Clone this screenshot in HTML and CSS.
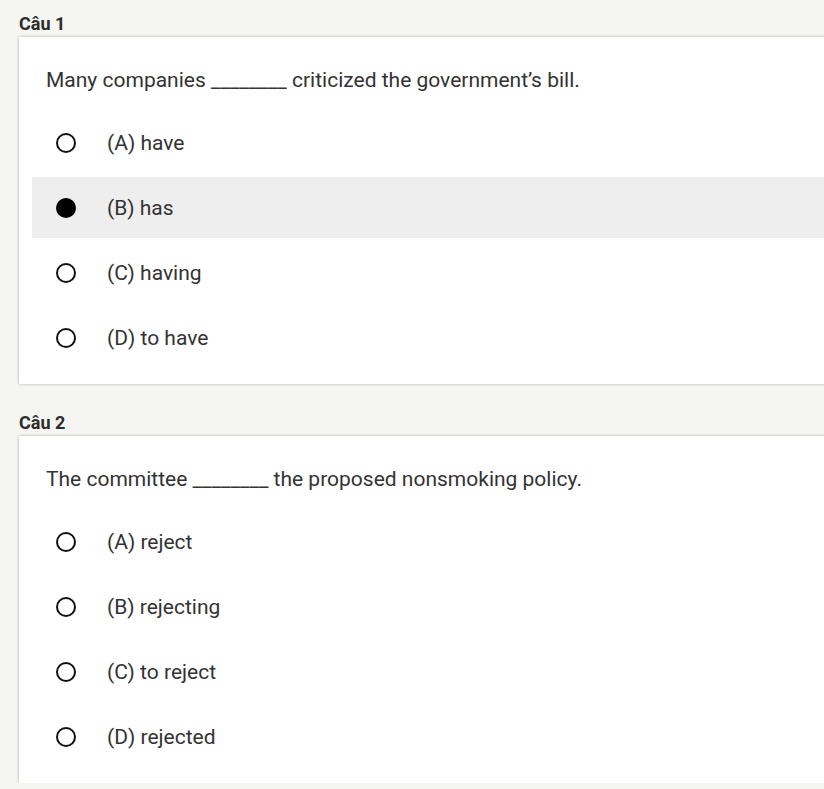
FILE: index.html
```html
<!DOCTYPE html>
<html lang="vi">
<head>
<meta charset="utf-8">
<title>Quiz</title>
<link rel="stylesheet" href="styles.css">
</head>
<body>
<div class="page">
  <section class="question">
    <div class="label">Câu 1</div>
    <div class="card">
      <p class="prompt">Many companies ________ criticized the government’s bill.</p>
      <ul class="options">
        <li class="option"><span class="radio"></span><span class="text">(A) have</span></li>
        <li class="option selected"><span class="radio checked"></span><span class="text">(B) has</span></li>
        <li class="option"><span class="radio"></span><span class="text">(C) having</span></li>
        <li class="option"><span class="radio"></span><span class="text">(D) to have</span></li>
      </ul>
    </div>
  </section>
  <section class="question">
    <div class="label">Câu 2</div>
    <div class="card">
      <p class="prompt">The committee ________ the proposed nonsmoking policy.</p>
      <ul class="options">
        <li class="option"><span class="radio"></span><span class="text">(A) reject</span></li>
        <li class="option"><span class="radio"></span><span class="text">(B) rejecting</span></li>
        <li class="option"><span class="radio"></span><span class="text">(C) to reject</span></li>
        <li class="option"><span class="radio"></span><span class="text">(D) rejected</span></li>
      </ul>
    </div>
  </section>
</div>
</body>
</html>
```
FILE: styles.css
```css
html, body {
  margin: 0;
  padding: 0;
  background: #f5f5f1;
  overflow: hidden;
}
body {
  font-family: Roboto, "Liberation Sans", sans-serif;
  color: #333;
}
.page {
  padding: 12px 0 0 19px;
  display: flex;
  flex-direction: column;
  gap: 27px;
}
.label {
  font-size: 18px;
  font-weight: 700;
  line-height: 24px;
  color: #2c2c2c;
  margin-bottom: 1px;
}
.card {
  background: #fff;
  width: 900px;
  padding: 28px 0 16px 13px;
  box-shadow: 0 0 3px rgba(0, 0, 0, 0.28);
}
.prompt {
  margin: 0 0 17px 14px;
  font-size: 21px;
  line-height: 30px;
  color: #333;
}
.options {
  list-style: none;
  margin: 0;
  padding: 0;
  display: flex;
  flex-direction: column;
  gap: 4px;
}
.option {
  height: 61px;
  display: flex;
  align-items: center;
  padding-left: 24px;
  font-size: 21px;
  color: #333;
}
.option.selected {
  background: #eeeeee;
}
.radio {
  width: 20px;
  height: 20px;
  box-sizing: border-box;
  border: 2px solid #111;
  border-radius: 50%;
  flex: none;
  margin-right: 31px;
}
.radio.checked {
  background: #000;
  border-color: #000;
}
```
